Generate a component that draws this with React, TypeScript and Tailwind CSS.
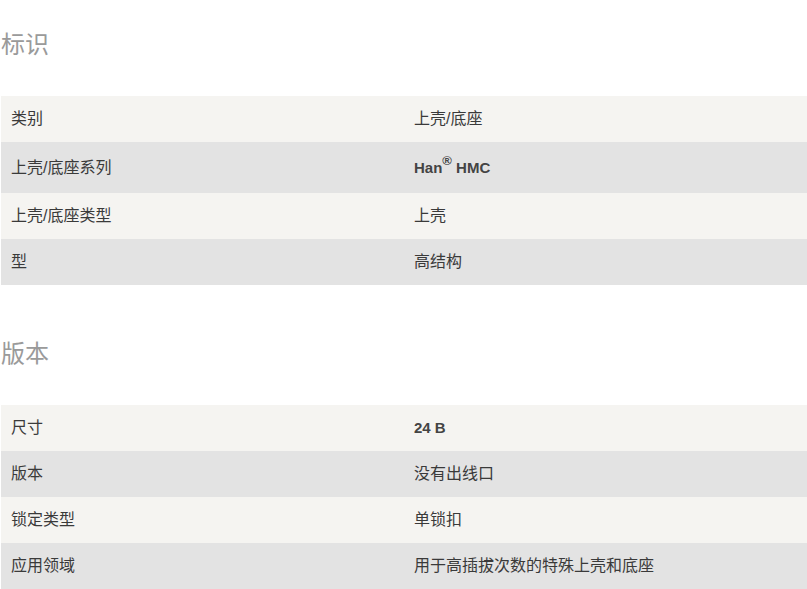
import React from 'react'

type Row = { label: string; value: React.ReactNode; tall?: boolean }

const identRows: Row[] = [
  { label: '类别', value: '上壳/底座' },
  {
    label: '上壳/底座系列',
    value: (
      <span className="font-bold text-[15px] text-[#444]">
        Han<sup className="text-[13px] -top-[0.55em]">®</sup> HMC
      </span>
    ),
    tall: true,
  },
  { label: '上壳/底座类型', value: '上壳' },
  { label: '型', value: '高结构' },
]

const versionRows: Row[] = [
  { label: '尺寸', value: <span className="font-bold text-[15px] text-[#444]">24 B</span> },
  { label: '版本', value: '没有出线口' },
  { label: '锁定类型', value: '单锁扣' },
  { label: '应用领域', value: '用于高插拔次数的特殊上壳和底座' },
]

function Section({ title, rows }: { title: string; rows: Row[] }) {
  return (
    <section>
      <h2 className="h-[30px] leading-[30px] text-[24px] text-[#9a9a9a] pl-[1px] mb-[36px]">{title}</h2>
      <div className="ml-[1px]">
        {rows.map((row, i) => (
          <div
            key={row.label}
            className={`grid grid-cols-2 items-center ${row.tall ? 'h-[51px]' : 'h-[46px]'} ${
              i % 2 === 0 ? 'bg-[#f5f4f1]' : 'bg-[#e3e3e3]'
            }`}
          >
            <div className="pl-[10px]">{row.label}</div>
            <div className="pl-[10px]">{row.value}</div>
          </div>
        ))}
      </div>
    </section>
  )
}

export default function App() {
  return (
    <div
      className="w-[807px] h-[589px] overflow-hidden bg-white text-[16px] leading-[20px] text-[#3a3a3a] pt-[30px]"
      style={{ fontFamily: '"Liberation Sans", "Noto Sans CJK SC", sans-serif' }}
    >
      <Section title="标识" rows={identRows} />
      <div className="h-[54px]" />
      <Section title="版本" rows={versionRows} />
    </div>
  )
}
